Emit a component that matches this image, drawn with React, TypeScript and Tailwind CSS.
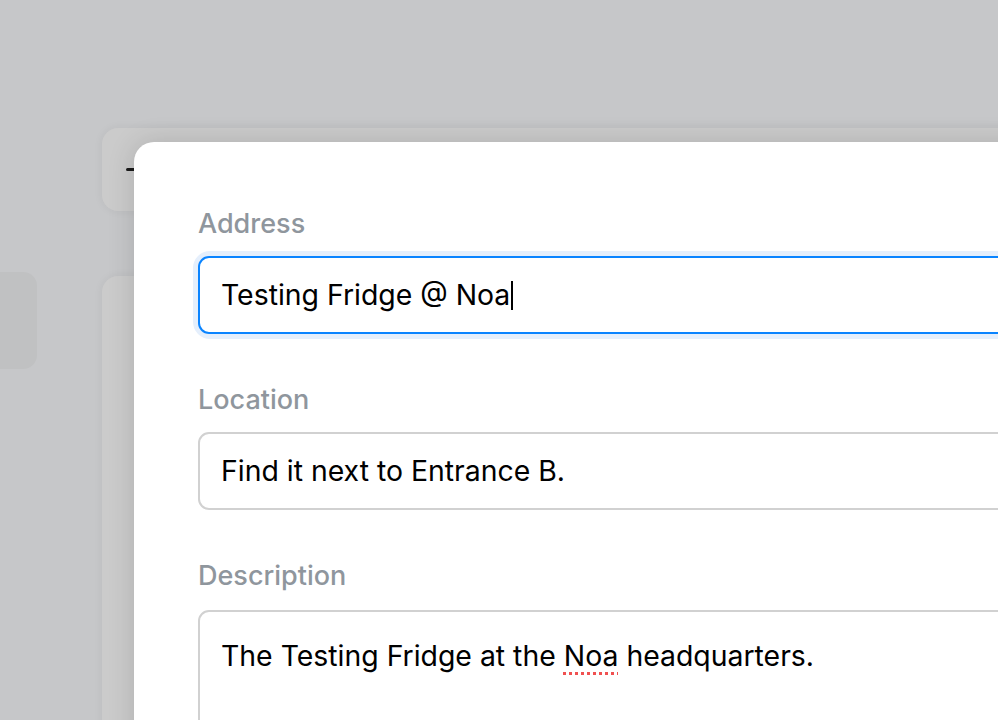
import React from "react";

export default function App() {
  const font = { fontFamily: "Inter, 'Noto Sans', sans-serif" };
  return (
    <div
      className="relative w-[998px] h-[720px] overflow-hidden bg-[#c6c7c9]"
      style={font}
    >
      {/* background page */}
      <div className="flex">
        <div className="w-[60px] -ml-[23px] mt-[272px] h-[97px] rounded-[14px] bg-[#c0c1c2] shrink-0" />
        <div className="ml-[65px] pt-[128px] flex flex-col gap-[65px] w-[1000px] shrink-0">
          <div className="h-[83px] rounded-[16px] bg-[#cbcbcb] shadow-[0_0_10px_rgba(0,0,0,0.06)] flex items-center pl-[24px]">
            <div className="w-[12px] h-[3px] bg-[#1a1a1a] rounded-full" />
          </div>
          <div className="h-[500px] rounded-[16px] bg-[#cbcbcb] shadow-[0_0_10px_rgba(0,0,0,0.06)]" />
        </div>
      </div>

      {/* modal */}
      <div className="absolute left-[134px] top-[142px] w-[900px] h-[700px] rounded-[20px] bg-white shadow-[0_0_28px_rgba(0,0,0,0.14)] pl-[64px] pt-[66px]">
        <div className="flex flex-col">
          <div className="text-[27px] leading-[32px] font-medium text-[#8f969d]">Address</div>
          <div className="mt-[16px] rounded-[12px] ring-[5px] ring-[#e5effc]">
            <div className="h-[78px] rounded-[11px] border-2 border-[#0a84ff] flex items-center pl-[21px] text-[28.4px] text-black">
              <span>Testing Fridge @ Noa</span>
              <span className="ml-[1px] w-[2px] h-[29px] bg-black" />
            </div>
          </div>

          <div className="mt-[50px] text-[27px] leading-[32px] font-medium text-[#8f969d]">Location</div>
          <div className="mt-[16px] h-[78px] rounded-[11px] border-2 border-[#d1d1d1] flex items-center pl-[21px] text-[28.4px] text-black">
            Find it next to Entrance B.
          </div>

          <div className="mt-[50px] text-[27px] leading-[32px] font-medium text-[#8f969d]">Description</div>
          <div className="mt-[18px] h-[200px] rounded-[11px] border-2 border-[#d1d1d1] pl-[21px] pt-[24px] text-[28.4px] leading-[40px] text-black">
            The Testing Fridge at the{" "}
            <span className="underline decoration-dotted decoration-[#f05050] decoration-[3px] underline-offset-[6px]">Noa</span>{" "}
            headquarters.
          </div>
        </div>
      </div>
    </div>
  );
}
